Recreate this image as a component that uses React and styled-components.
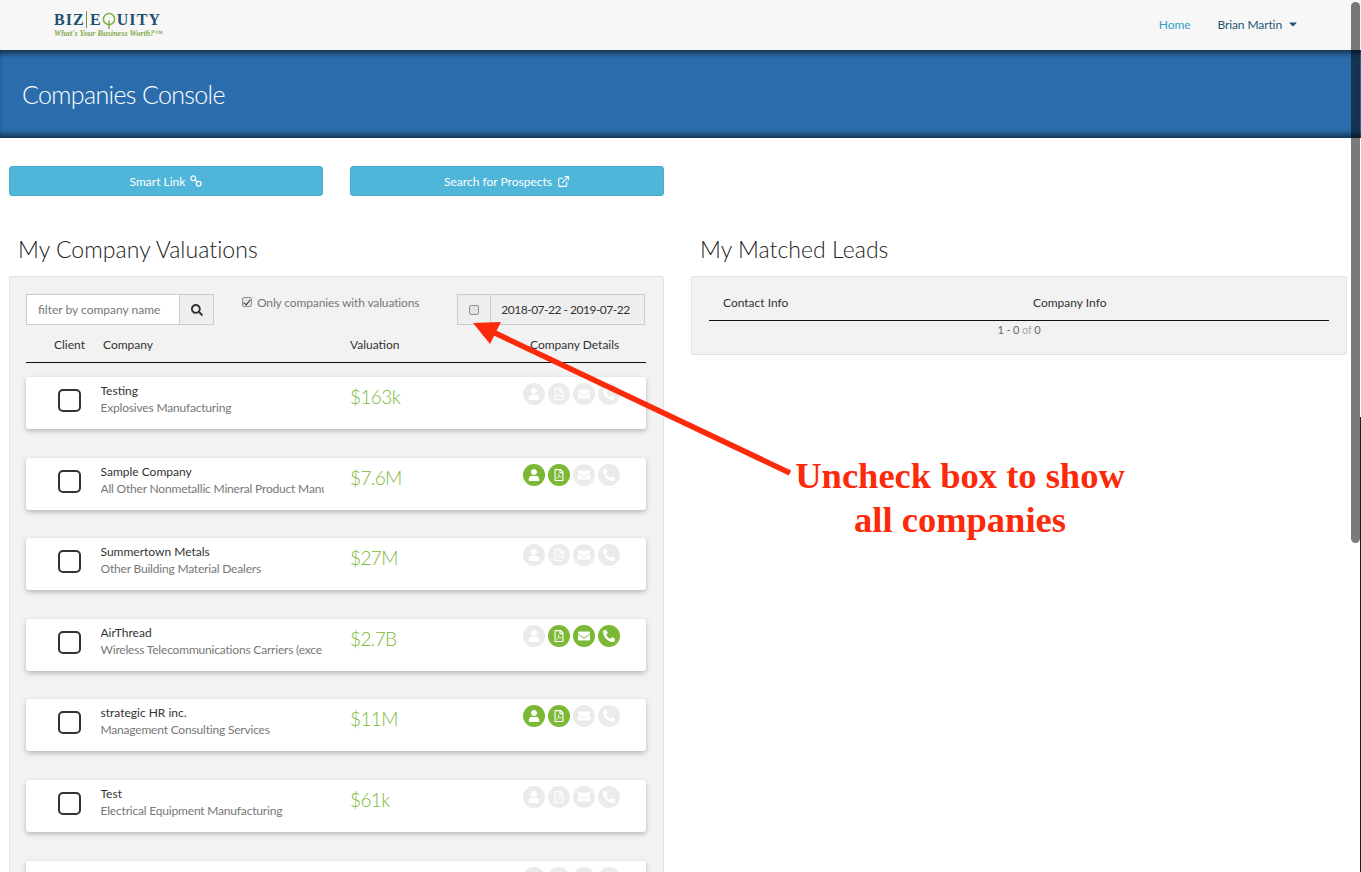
import React from 'react';
import styled, { createGlobalStyle } from 'styled-components';
import { FaUser, FaRegFilePdf, FaEnvelope, FaPhoneAlt, FaSearch, FaCaretDown } from 'react-icons/fa';
import { ExternalLink } from 'lucide-react';

const GREEN = '#7ab835';
const FONT = `Lato, 'Open Sans', sans-serif`;

const GlobalStyle = createGlobalStyle`
  html, body {
    margin: 0;
    padding: 0;
    height: 100%;
    overflow: hidden;
    background: #fff;
    font-family: ${FONT};
  }
  * { box-sizing: border-box; }
`;

const Page = styled.div`
  position: relative;
  width: 1361px;
  height: 872px;
  overflow: hidden;
`;

const Navbar = styled.nav`
  display: flex;
  align-items: center;
  justify-content: space-between;
  height: 50px;
  padding: 0 62px 0 54px;
  background: #f7f7f7;
`;

const Logo = styled.div`
  display: flex;
  flex-direction: column;
  width: 112px;
`;

const LogoMark = styled.div`
  display: flex;
  align-items: center;
  height: 17px;
  font-family: 'Liberation Serif', serif;
  font-weight: 700;
  font-size: 16px;
  letter-spacing: 1.1px;
  color: #1d4f72;
`;

const LogoBar = styled.span`
  width: 1px;
  height: 17px;
  margin: 0 3px 0 1px;
  background: #6f9a3c;
`;

const LogoTag = styled.div`
  font-family: 'Liberation Serif', serif;
  font-style: italic;
  font-weight: 700;
  font-size: 8.2px;
  line-height: 10px;
  margin-top: 1px;
  color: #86ab4e;
  white-space: nowrap;
`;

const NavLinks = styled.div`
  display: flex;
  align-items: center;
  gap: 27px;
  padding-bottom: 2px;
`;

const NavLink = styled.a`
  display: flex;
  align-items: center;
  gap: 5px;
  font-size: 12px;
  letter-spacing: -0.1px;
  color: ${props => props.color};
`;

const Hero = styled.header`
  display: flex;
  align-items: center;
  height: 88px;
  padding: 0 22px;
  background: #2b6dac;
  box-shadow: inset 0 7px 6px -4px rgba(0, 0, 0, 0.6), inset 0 -7px 6px -4px rgba(0, 0, 0, 0.6);
`;

const HeroTitle = styled.h1`
  margin: 0;
  font-size: 25px;
  font-weight: 300;
  letter-spacing: -0.65px;
  color: #fff;
`;

const Columns = styled.main`
  display: grid;
  grid-template-columns: 655px 656px;
  column-gap: 27px;
  padding: 28px 0 0 9px;
`;

const ButtonRow = styled.div`
  display: flex;
  gap: 27px;
  grid-column: 1 / 3;
  margin-bottom: 39px;
`;

const ActionButton = styled.button`
  display: flex;
  align-items: center;
  justify-content: center;
  gap: 5px;
  width: 314px;
  height: 30px;
  padding: 0;
  background: #50b6d9;
  border: 1px solid #46aed2;
  border-radius: 3px;
  font-family: ${FONT};
  font-size: 12px;
  color: #fff;
`;

const SectionTitle = styled.h2`
  margin: 0 0 12px;
  padding-left: 9px;
  height: 29px;
  font-size: 23px;
  line-height: 29px;
  font-weight: 300;
  letter-spacing: 0.05px;
  color: #222;
`;

const Panel = styled.section`
  background: #f2f2f2;
  border: 1px solid #e2e2e2;
  border-radius: 2px;
`;

const LeftPanel = styled(Panel)`
  height: 700px;
  padding: 17px 17px 0 16px;
`;

const Toolbar = styled.div`
  display: flex;
  align-items: flex-start;
  height: 31px;
`;

const FilterInput = styled.input`
  width: 153px;
  height: 31px;
  padding: 0 11px;
  background: #fff;
  border: 1px solid #ccc;
  border-right: 0;
  font-family: ${FONT};
  font-size: 12px;
  &::placeholder { color: #777; opacity: 1; }
`;

const Addon = styled.div`
  display: flex;
  align-items: center;
  justify-content: center;
  width: ${props => props.width}px;
  height: 31px;
  background: #eee;
  border: 1px solid #ccc;
  font-size: 12px;
  color: #333;
`;

const DateAddon = styled(Addon)`
  border-left: 0;
  letter-spacing: -0.5px;
  padding: 0 4px 1px 0;
`;

const OnlyLabel = styled.label`
  display: flex;
  align-items: center;
  gap: 5px;
  height: 16px;
  margin: 0 37px 0 28px;
  width: 178px;
  font-size: 12px;
  letter-spacing: -0.13px;
  color: #777;
  white-space: nowrap;
`;

const SmallCheck = styled.input.attrs({ type: 'checkbox' })`
  position: relative;
  appearance: none;
  flex: none;
  width: 10px;
  height: 10px;
  margin: 0;
  background: #e4e4e4;
  border: 1px solid #8f8f8f;
  border-radius: 2px;
  &:checked::after {
    content: '';
    position: absolute;
    left: 2px;
    top: 0;
    width: 3px;
    height: 6px;
    border: solid #333;
    border-width: 0 1.5px 1.5px 0;
    transform: rotate(40deg);
  }
`;

const TableHead = styled.div`
  display: grid;
  grid-template-columns: 49px 247px 180px 1fr;
  align-items: center;
  height: 38px;
  padding: 1px 0 0 28px;
  border-bottom: 1px solid #111;
  font-size: 12px;
  color: #333;
`;

const HeadCell = styled.div`
  margin-left: ${props => props.offset || 0}px;
  white-space: nowrap;
`;

const RowList = styled.div`
  display: flex;
  flex-direction: column;
  gap: 28.6px;
  margin-top: 14px;
`;

const Row = styled.article`
  display: grid;
  grid-template-columns: 74.5px 249.5px 173px 1fr;
  flex: none;
  height: 52px;
  background: #fff;
  border-radius: 3px;
  box-shadow: 0 2px 5px rgba(0, 0, 0, 0.25);
`;

const RowCheck = styled.input.attrs({ type: 'checkbox' })`
  appearance: none;
  width: 23px;
  height: 23px;
  margin: 12px 0 0 32px;
  background: #fff;
  border: 2px solid #333;
  border-radius: 5px;
`;

const NameCell = styled.div`
  padding-top: 5px;
  width: 223px;
  overflow: hidden;
  white-space: nowrap;
  font-size: 12px;
  line-height: 17px;
`;

const CompanyName = styled.div`
  color: #333;
`;

const Industry = styled.div`
  letter-spacing: -0.19px;
  color: #777;
`;

const Valuation = styled.div`
  padding-top: 7px;
  font-size: 19px;
  line-height: 26px;
  font-weight: 300;
  letter-spacing: -0.6px;
  color: ${GREEN};
`;

const IconGroup = styled.div`
  display: flex;
  gap: 3px;
  padding-top: 6px;
`;

const IconDot = styled.span`
  display: flex;
  align-items: center;
  justify-content: center;
  width: 22px;
  height: 22px;
  border-radius: 50%;
  font-size: 12px;
  color: #fff;
  background: ${props => (props.$on ? GREEN : '#ebebeb')};
`;

const RightPanel = styled(Panel)`
  height: 79px;
  padding: 0 17px;
`;

const LeadHead = styled.div`
  display: grid;
  grid-template-columns: 324px 1fr;
  align-items: center;
  height: 44px;
  padding: 7px 0 0 14px;
  border-bottom: 1px solid #111;
  font-size: 12px;
  color: #333;
`;

const Pager = styled.div`
  margin-top: 2px;
  text-align: center;
  font-size: 11px;
  letter-spacing: -0.15px;
  color: #666;
`;

const PagerOf = styled.span`
  color: #aaa;
`;

const Scrollbar = styled.div`
  position: absolute;
  top: 2px;
  right: 1px;
  width: 9px;
  height: 541px;
  border-radius: 5px;
  background: rgba(0, 0, 0, 0.52);
`;

const WindowEdge = styled.div`
  position: absolute;
  top: 417px;
  right: 0;
  bottom: 0;
  width: 1px;
  background: #222;
`;

const Note = styled.div`
  position: absolute;
  left: 760px;
  top: 454px;
  width: 400px;
  text-align: center;
  font-family: 'Liberation Serif', serif;
  font-weight: 700;
  font-size: 36.5px;
  line-height: 44px;
  color: #fb2a0b;
`;

const ArrowLayer = styled.svg`
  position: absolute;
  left: 0;
  top: 0;
  pointer-events: none;
`;

const TreeQ = () => (
  <svg width="14" height="18" viewBox="0 0 15 19" style={{ margin: '2px 1px 0 0' }}>
    <circle cx="7.5" cy="7.5" r="6" fill="none" stroke="#7fae43" strokeWidth="1.6" />
    <path d="M7.5 9v9" stroke="#7fae43" strokeWidth="1.6" />
  </svg>
);

const LinkIcon = () => (
  <svg width="12" height="12" viewBox="0 0 13 13" fill="none" stroke="#fff" strokeWidth="1.3">
    <circle cx="3.6" cy="3.6" r="2.6" />
    <circle cx="9.4" cy="9.4" r="2.6" />
    <path d="M4.8 4.8l3.4 3.4" />
  </svg>
);

const companies = [
  { name: 'Testing', industry: 'Explosives Manufacturing', value: '$163k', on: [0, 0, 0, 0] },
  { name: 'Sample Company', industry: 'All Other Nonmetallic Mineral Product Manu', value: '$7.6M', on: [1, 1, 0, 0] },
  { name: 'Summertown Metals', industry: 'Other Building Material Dealers', value: '$27M', on: [0, 0, 0, 0] },
  { name: 'AirThread', industry: 'Wireless Telecommunications Carriers (exce', value: '$2.7B', on: [0, 1, 1, 1] },
  { name: 'strategic HR inc.', industry: 'Management Consulting Services', value: '$11M', on: [1, 1, 0, 0] },
  { name: 'Test', industry: 'Electrical Equipment Manufacturing', value: '$61k', on: [0, 0, 0, 0] },
  { name: '', industry: '', value: '$4M', on: [0, 0, 0, 0] },
];

const icons = [FaUser, FaRegFilePdf, FaEnvelope, FaPhoneAlt];

const CompanyRow = ({ company }) => (
  <Row>
    <RowCheck />
    <NameCell>
      <CompanyName>{company.name}</CompanyName>
      <Industry>{company.industry}</Industry>
    </NameCell>
    <Valuation>{company.value}</Valuation>
    <IconGroup>
      {icons.map((Icon, i) => (
        <IconDot key={i} $on={company.on[i]}>
          <Icon />
        </IconDot>
      ))}
    </IconGroup>
  </Row>
);

const App = () => (
  <Page>
    <GlobalStyle />
    <Navbar>
      <Logo>
        <LogoMark>
          BIZ<LogoBar />E<TreeQ />UITY
        </LogoMark>
        <LogoTag>What's Your Business Worth?™</LogoTag>
      </Logo>
      <NavLinks>
        <NavLink color="#2f9fc6">Home</NavLink>
        <NavLink color="#1d5573">
          Brian Martin <FaCaretDown size={12} />
        </NavLink>
      </NavLinks>
    </Navbar>
    <Hero>
      <HeroTitle>Companies Console</HeroTitle>
    </Hero>
    <Columns>
      <ButtonRow>
        <ActionButton>
          Smart Link <LinkIcon />
        </ActionButton>
        <ActionButton>
          Search for Prospects <ExternalLink size={13} />
        </ActionButton>
      </ButtonRow>
      <SectionTitle>My Company Valuations</SectionTitle>
      <SectionTitle>My Matched Leads</SectionTitle>
      <LeftPanel>
        <Toolbar>
          <FilterInput placeholder="filter by company name" />
          <Addon width={35}>
            <FaSearch size={12} />
          </Addon>
          <OnlyLabel>
            <SmallCheck defaultChecked /> Only companies with valuations
          </OnlyLabel>
          <Addon width={34}>
            <SmallCheck />
          </Addon>
          <DateAddon width={154}>2018-07-22 - 2019-07-22</DateAddon>
        </Toolbar>
        <TableHead>
          <HeadCell>Client</HeadCell>
          <HeadCell>Company</HeadCell>
          <HeadCell>Valuation</HeadCell>
          <HeadCell>Company Details</HeadCell>
        </TableHead>
        <RowList>
          {companies.map((company, i) => (
            <CompanyRow key={i} company={company} />
          ))}
        </RowList>
      </LeftPanel>
      <RightPanel>
        <LeadHead>
          <HeadCell>Contact Info</HeadCell>
          <HeadCell offset={-14}>Company Info</HeadCell>
        </LeadHead>
        <Pager>
          1 - 0 <PagerOf>of</PagerOf> 0
        </Pager>
      </RightPanel>
    </Columns>
    <Scrollbar />
    <WindowEdge />
    <ArrowLayer width="1361" height="872" viewBox="0 0 1361 872">
      <path d="M790 473L495 333" stroke="#fb2a0b" strokeWidth="5.5" />
      <path d="M473 323L501 322L490 344Z" fill="#fb2a0b" />
    </ArrowLayer>
    <Note>
      Uncheck box to show
      <br />
      all companies
    </Note>
  </Page>
);

export default App;
